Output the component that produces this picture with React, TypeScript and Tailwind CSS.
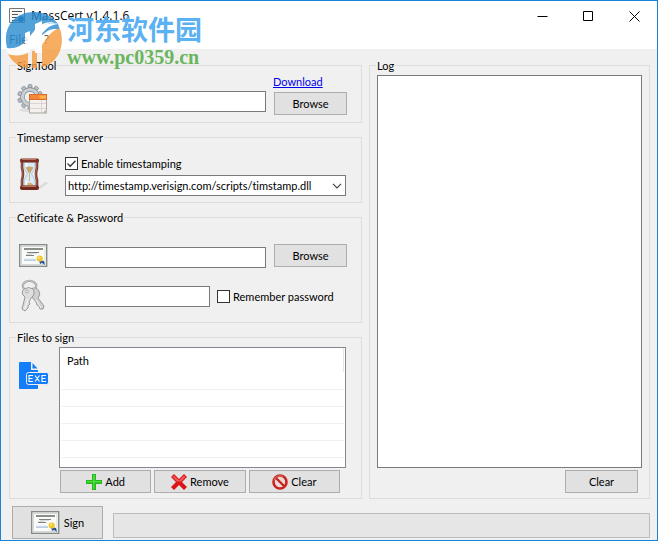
import { useState } from "react"
import type { ReactNode } from "react"

const BUTTON = "flex items-center justify-center border border-[#adadad] bg-[#e1e1e1]"
const INPUT = "h-[21px] min-w-0 border border-[#7a7a7a] bg-white px-1 outline-none"

function Group({ title, className, children }: { title: string; className?: string; children: ReactNode }) {
  return (
    <fieldset className={`min-w-0 border border-[#dcdcdc] ${className ?? ""}`}>
      <legend className="ml-[6px] h-[15px] px-px leading-4">{title}</legend>
      {children}
    </fieldset>
  )
}

function CheckBox({ label, checked, onChange }: { label: string; checked: boolean; onChange: (value: boolean) => void }) {
  return (
    <label className="flex items-center gap-[3px] leading-[13px] whitespace-nowrap">
      <span className="grid">
        <input
          type="checkbox"
          checked={checked}
          onChange={e => onChange(e.target.checked)}
          className="col-start-1 row-start-1 size-[13px] appearance-none border border-[#333] bg-white"
        />
        {checked && (
          <svg viewBox="0 0 13 13" className="pointer-events-none col-start-1 row-start-1 size-[13px]">
            <path d="M2.5 6.5 5.2 9.2 10.5 3.7" fill="none" stroke="#333" strokeWidth="1.3" />
          </svg>
        )}
      </span>
      {label}
    </label>
  )
}

function GearIcon() {
  return (
    <svg viewBox="0 0 32 32" className="size-8 shrink-0">
      <ellipse cx="13" cy="27" rx="11" ry="2" fill="#dedede" />
      <g fill="#b5bcc1" stroke="#858d93" strokeWidth=".7">
        {[0, 36, 72, 108, 144, 180, 216, 252, 288, 324].map(angle => (
          <rect key={angle} x="11" y="1.6" width="4" height="5" rx="1" transform={`rotate(${angle} 13 14)`} />
        ))}
      </g>
      <circle cx="13" cy="14" r="7.5" fill="none" stroke="#7f888e" strokeWidth="4.4" />
      <circle cx="13" cy="14" r="7.5" fill="none" stroke="#c8ced2" strokeWidth="3.2" />
      <rect x="12.5" y="11.5" width="17" height="18.5" fill="#f4f1ed" stroke="#aaa5a0" />
      <rect x="12.5" y="11.5" width="17" height="5" fill="#f48638" stroke="#d96d2d" />
      <path d="M22 12.5h7v3h-6z" fill="#ffb347" />
      <path d="M13 20.5h16M13 25.5h16M24.5 17v13" stroke="#d4cfca" strokeWidth=".8" />
      <path d="m25.5 30 4.5-4v4z" fill="#bcb8b4" />
    </svg>
  )
}

function HourglassIcon() {
  return (
    <svg viewBox="0 0 32 34" className="h-[34px] w-8 shrink-0">
      <path d="m20 31 8-6 4 .5-9 6.500z" fill="#dcdcdc" />
      <path d="M7 5h11v6l-3.500 6 3.500 6v6H7v-6l3.500-6L7 11z" fill="#d9ebfa" stroke="#a8c9e4" />
      <path d="M8.500 10.500q4-2 8 0l-3.500 6h-1z" fill="#c9a76b" />
      <path d="M12 17h1v7h-1zM8 28.500q4.500-6 9 0z" fill="#d9b06d" />
      <path d="M9.500 6v4M9.500 24v4" stroke="#fff" strokeWidth="1.500" />
      <path d="M5 5v6q1 3 1 6t-1 6v6M20 5v6q-1 3-1 6t1 6v6" fill="none" stroke="#7d3a2c" strokeWidth="2.600" />
      <path d="M4.700 5v6q1 3 1 6t-1 6v6M19.700 5v6q-1 3-1 6t1 6v6" fill="none" stroke="#b06a55" strokeWidth=".8" />
      <rect x="3" y="1.500" width="19" height="4" rx="1.500" fill="#7b3024" />
      <rect x="3" y="28.500" width="19" height="4.500" rx="2" fill="#71291f" />
      <path d="M5 2.500h14M5 29.500h14" stroke="#b9745c" />
    </svg>
  )
}

function CertificateIcon() {
  return (
    <svg viewBox="0 0 30 24" className="h-6 w-[30px] shrink-0">
      <rect x=".7" y=".7" width="27" height="21.6" fill="#fff" stroke="#858b86" strokeWidth="1.4" />
      <rect x="2.5" y="2.5" width="23.500" height="18" fill="#fafafa" stroke="#d5d8d5" />
      <path d="M5 5h19" stroke="#8a9088" strokeWidth="2" />
      <path d="M8 8.5h12M7 11.5h8" stroke="#7c837d" />
      <path d="M9 9.500h9M7 10.500h6" stroke="#c0c4c0" strokeWidth=".6" />
      <path d="m5 15 2 1 2-1 2 1 2-1 4 1M5 16.500h12" fill="none" stroke="#a9c5df" strokeWidth=".8" />
      <path d="m20 16 1 4 2-1 3 2-1-4z" fill="#28559b" />
      <circle cx="20.7" cy="14.500" r="3.1" fill="#f2c72b" />
      <circle cx="20" cy="13.800" r="1.2" fill="#ffe26b" />
    </svg>
  )
}

function KeysIcon() {
  return (
    <svg viewBox="0 0 32 34" className="h-[34px] w-8 shrink-0">
      <ellipse cx="12.5" cy="7" rx="6.7" ry="5.2" fill="none" stroke="#999" strokeWidth="2.2" />
      <ellipse cx="12.5" cy="7" rx="6.7" ry="5.2" fill="none" stroke="#ddd" strokeWidth=".8" />
      <path d="M14 10q5-3 8 2 2 4-1 7l6 8-1 3h-3l-1-3-2-1-1-3-4-5q-5-4-1-8z" fill="#d0d0d0" stroke="#9a9a9a" />
      <path d="M7 10q5-3 9 0 3 5-2 9l-2 4 1 2-2 2v2l-3 3-3-2 3-12q-5-4-1-8z" fill="#dedede" stroke="#9a9a9a" />
      <circle cx="10" cy="12.5" r="1.4" fill="#efefef" stroke="#aaa" />
      <path d="m11 20-3 10M19 21l5 8" stroke="#f8f8f8" />
    </svg>
  )
}

function ExeIcon() {
  return (
    <svg viewBox="0 0 30 28" className="h-7 w-[30px] shrink-0">
      <path d="M1 0h11v8h7v18q0 1-1 1H1q-1 0-1-1V1q0-1 1-1z" fill="#147dfa" />
      <path d="m13.5 1 5 5.5h-5z" fill="#147dfa" />
      <rect x="7.5" y="10.5" width="22" height="12" rx="2" fill="#147dfa" stroke="#efefef" />
      <path d="M14 13.5h-4v6h4M10 16.5h3.5M16 13.5l4.5 6M20.5 13.5l-4.5 6M27 13.5h-4v6h4M23 16.5h3.5" fill="none" stroke="#fff" strokeWidth="1.1" />
    </svg>
  )
}

function AddIcon() {
  return (
    <svg viewBox="0 0 16 16" className="size-4">
      <path d="M6 0h4v6h6v4h-6v6H6v-6H0V6h6z" fill="#22b91d" />
      <path d="M7 1h2v6h6v1.500H8.500V15H7V8.500H1V7h6z" fill="#4fd93f" />
    </svg>
  )
}

function RemoveIcon() {
  return (
    <svg viewBox="0 0 16 16" className="size-4">
      <path d="m3 0 5 5 5-5 3 3-5 5 5 5-3 3-5-5-5 5-3-3 5-5-5-5z" fill="#da1417" />
      <path d="m3 1.5 5 5 5-5L14.500 3 10 7.500H6L1.500 3z" fill="#f05a58" />
    </svg>
  )
}

function ForbidIcon() {
  return (
    <svg viewBox="0 0 16 16" className="size-4">
      <circle cx="8" cy="8" r="6.500" fill="#e6dcdc" stroke="#c9251e" strokeWidth="2.600" />
      <path d="m3.500 3.500 9 9" stroke="#c9251e" strokeWidth="2.400" />
      <path d="M2 6.500a6.200 6.200 0 0 1 9-4" fill="none" stroke="#df7770" />
    </svg>
  )
}

function Watermark() {
  return (
    <div className="pointer-events-none absolute top-[10px] left-1 flex items-start gap-1">
      <svg viewBox="0 0 58 58" className="size-[58px] opacity-80">
        {/* blue upper sweep */}
        <path d="M2 37C-3 16 10 1 29 1c11 0 19 5 24 12-9-4-17-1-23 6C22 28 17 39 2 37z" fill="#278bd0" />
        <path d="M53 13c-6-2-12-1-17 4v8l5-4c4-3 9-4 14-2z" fill="#278bd0" />
        {/* orange lower sweep */}
        <path d="M55 18c6 17-3 35-18 38V34c4-7 9-13 15-16zM3 43c4 8 11 13 20 14V42c-6 3-13 3-20 1zM27 40h5v17h-5z" fill="#f69b3c" />
        {/* white buildings */}
        <path d="M1 37c10 4 18 0 23-8 7-11 15-19 29-16-11 1-16 9-22 19-6 9-16 15-28 11z" fill="#fff" />
        <path d="M20 22l5-2v21h-5zM30 13l7-3v32h-7z" fill="#fff" />
      </svg>
      <div className="whitespace-nowrap">
        <div className="font-['Noto_Sans_CJK_SC',sans-serif] text-[27px] leading-[36px] font-bold text-[#5bb1f1]">河东软件园</div>
        <div className="font-['Liberation_Serif',serif] text-[20px] leading-[20px] font-bold text-[#6ab55d]">www.pc0359.cn</div>
      </div>
    </div>
  )
}

function App() {
  const [timestamping, setTimestamping] = useState(true)
  const [remember, setRemember] = useState(false)

  return (
    <div className="relative min-h-screen border border-[#1883d7] bg-[#f0f0f0] font-[Lato,sans-serif] text-[11px] leading-4 text-black [font-variant-ligatures:none]">
      <header className="bg-white">
        <div className="flex h-[30px] items-center">
          <svg viewBox="0 0 16 16" className="ml-2 size-4">
            <path d="M.5.5h15v14H.5z" fill="#fafafa" stroke="#777" />
            <path d="M3 3.500h10M3 6.500h6M3 9.500h5M3 12.500h7" stroke="#555" />
            <circle cx="12" cy="11" r="3" fill="#326090" />
          </svg>
          <h1 className="ml-[6px] flex-1 font-['Open_Sans',sans-serif] text-[12px]">MassCert v1.4.1.6</h1>
          <button aria-label="Minimize" className="flex h-[30px] w-[46px] items-center justify-center">
            <svg viewBox="0 0 11 11" className="size-[11px]"><path d="M.5 5.500h10" stroke="#000" /></svg>
          </button>
          <button aria-label="Maximize" className="flex h-[30px] w-[46px] items-center justify-center">
            <svg viewBox="0 0 11 11" className="size-[11px]"><path d="M.5.500h9v9h-9z" fill="none" stroke="#000" /></svg>
          </button>
          <button aria-label="Close" className="flex h-[30px] w-[46px] items-center justify-center">
            <svg viewBox="0 0 11 11" className="size-[11px]"><path d="m.5.5 10 10M10.500.5l-10 10" stroke="#000" /></svg>
          </button>
        </div>
        <nav className="flex h-[18px] gap-4 pl-2 font-['Open_Sans',sans-serif] text-[12px] text-[#555]">
          <button>File</button>
          <button>?</button>
        </nav>
      </header>

      <main className="pt-[9px] pr-[7px] pl-2">
        <div className="flex gap-[7px]">
          <div className="flex w-[353px] shrink-0 flex-col gap-[7px]">
            <Group title="SignTool">
              <div className="flex items-end pr-[14px] pb-[7px] pl-[7px]">
                <GearIcon />
                <input aria-label="SignTool path" className={`${INPUT} mb-[3px] ml-4 flex-1`} />
                <div className="ml-2 w-[73px]">
                  <a href="#download" className="-ml-px block h-[19px] leading-[18px] text-[#0000ee] underline">Download</a>
                  <button className={`${BUTTON} h-[23px] w-full`}>Browse</button>
                </div>
              </div>
            </Group>

            <Group title="Timestamp server">
              <div className="flex items-start gap-4 pt-3 pr-[15px] pb-[6px] pl-[7px]">
                <HourglassIcon />
                <div className="flex min-w-0 flex-1 flex-col gap-[5px]">
                  <CheckBox label="Enable timestamping" checked={timestamping} onChange={setTimestamping} />
                  <div className="grid items-center">
                    <select aria-label="Timestamp server" className="col-start-1 row-start-1 h-[21px] w-full appearance-none border border-[#7a7a7a] bg-white pr-5 pl-[2px]">
                      <option>http://timestamp.verisign.com/scripts/timstamp.dll</option>
                    </select>
                    <svg viewBox="0 0 10 6" className="pointer-events-none col-start-1 row-start-1 mr-1 h-[6px] w-[10px] justify-self-end">
                      <path d="m1 .8 4 4 4-4" fill="none" stroke="#444" strokeWidth="1.200" />
                    </svg>
                  </div>
                </div>
              </div>
            </Group>

            <Group title="Cetificate &amp; Password">
              <div className="flex items-center pt-[18px] pr-[14px] pl-[9px]">
                <CertificateIcon />
                <input aria-label="Certificate" className={`${INPUT} mt-1 ml-[16px] flex-1`} />
                <button className={`${BUTTON} ml-2 h-[23px] w-[73px]`}>Browse</button>
              </div>
              <div className="flex items-center pt-[11px] pb-[9px] pl-[7px]">
                <KeysIcon />
                <input type="password" aria-label="Password" className={`${INPUT} mr-[7px] ml-4 w-[145px]`} />
                <CheckBox label="Remember password" checked={remember} onChange={setRemember} />
              </div>
            </Group>

            <Group title="Files to sign">
              <div className="flex pt-[2px] pr-[15px] pb-[5px] pl-[9px]">
                <div className="w-10 shrink-0 pt-[15px]">
                  <ExeIcon />
                </div>
                <div className="min-w-0 flex-1">
                  <div className="h-[121px] border border-[#828790] bg-white px-px">
                    <table className="w-full table-fixed border-collapse">
                      <thead>
                        <tr className="h-6">
                          <th className="border-r border-[#e5e5e5] pt-px pl-[6px] text-left font-normal">Path</th>
                        </tr>
                      </thead>
                      <tbody>
                        {[1, 2, 3, 4, 5].map(row => (
                          <tr key={row} className="h-[17px]">
                            <td className="border-b border-[#f0f0f0] p-0" />
                          </tr>
                        ))}
                      </tbody>
                    </table>
                  </div>
                  <div className="mt-[2px] mr-[6px] ml-px flex gap-[3px]">
                    <button className={`${BUTTON} h-[23px] flex-1 gap-[3px]`}><AddIcon />Add</button>
                    <button className={`${BUTTON} h-[23px] flex-1 gap-[3px]`}><RemoveIcon />Remove</button>
                    <button className={`${BUTTON} h-[23px] flex-1 gap-[3px]`}><ForbidIcon />Clear</button>
                  </div>
                </div>
              </div>
            </Group>
          </div>

          <Group title="Log" className="flex-1">
            <div className="flex h-full flex-col pt-[2px] pr-[7px] pb-[5px] pl-[7px]">
              <textarea aria-label="Log" readOnly className="w-full flex-1 resize-none border border-[#7a7a7a] bg-white p-1 outline-none" />
              <button className={`${BUTTON} mt-[2px] mr-1 h-[23px] w-[73px] self-end`}>Clear</button>
            </div>
          </Group>
        </div>

        <div className="mt-[7px] flex items-center gap-[10px] pl-[3px]">
          <button className={`${BUTTON} h-[33px] w-[91px] gap-[3px]`}><CertificateIcon />Sign</button>
          <div role="progressbar" aria-label="Signing progress" className="mt-[6px] h-[25px] flex-1 border border-[#bcbcbc] bg-[#e6e6e6]" />
        </div>
      </main>

      <Watermark />
    </div>
  )
}

export default App
